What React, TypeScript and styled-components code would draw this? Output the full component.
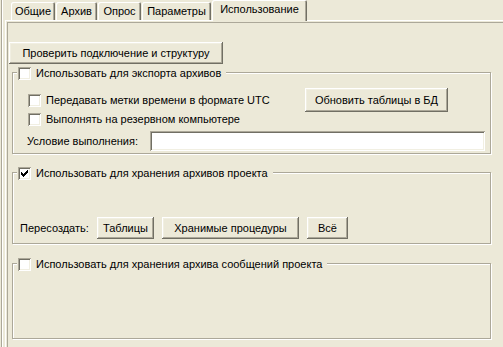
import React from "react";
import styled, { createGlobalStyle } from "styled-components";

const GlobalStyle = createGlobalStyle`
  html, body {
    margin: 0;
    padding: 0;
    background: #ece9d8;
  }
  body {
    font-family: "Liberation Sans", Arial, sans-serif;
    font-size: 11px;
    color: #000;
  }
`;

const Window = styled.div`
  width: 503px;
  height: 347px;
  overflow: hidden;
  background: #ece9d8;
  box-sizing: border-box;
  padding-left: 1px;
  display: flex;
`;

const Frame = styled.div`
  flex: 1;
  display: flex;
  border-left: 1px solid #aca899;
  box-shadow: inset 1px 0 #fff;
  padding-left: 3px;
`;

const TabControl = styled.div`
  flex: 1;
  display: flex;
  flex-direction: column;
`;

const TabRow = styled.div`
  height: 20px;
  display: flex;
  align-items: flex-end;
  gap: 1px;
  padding-left: 6px;
`;

const Tab = styled.div<{ $w: number; $active?: boolean }>`
  position: relative;
  z-index: ${p => (p.$active ? 1 : 0)};
  box-sizing: border-box;
  width: ${p => p.$w}px;
  height: ${p => (p.$active ? 21 : 18)}px;
  margin-bottom: ${p => (p.$active ? -1 : 0)}px;
  padding-bottom: ${p => (p.$active ? 3 : 1)}px;
  display: flex;
  align-items: center;
  justify-content: center;
  background: #ece9d8;
  border-radius: 2px 2px 0 0;
  box-shadow: inset 1px 1px #fff, inset -1px 0 #716f64, inset -2px 0 #aca899;
  white-space: nowrap;
`;

const Page = styled.div`
  flex: 1;
  display: flex;
  border-top: 1px solid #fff;
  border-left: 1px solid #fff;
`;

const Sheet = styled.div`
  flex: 1;
  margin: 1px 0 0 1px;
  border-top: 1px solid #aca899;
  border-left: 1px solid #aca899;
  padding-top: 19px;
  display: flex;
  flex-direction: column;
  align-items: flex-start;
`;

const Button = styled.button<{ $w: number; $h?: number }>`
  box-sizing: border-box;
  width: ${p => p.$w}px;
  height: ${p => p.$h ?? 22}px;
  margin: 0;
  padding: 0 0 1px;
  border: none;
  background: #ece9d8;
  font: inherit;
  color: #000;
  white-space: nowrap;
  box-shadow: inset -1px -1px #716f64, inset 1px 1px #fff,
    inset -2px -2px #aca899, inset 2px 2px #f1efe2;
`;

const CheckButton = styled(Button)`
  margin-left: 1px;
`;

const Group = styled.div<{ $gap: number }>`
  position: relative;
  box-sizing: border-box;
  width: 479px;
  margin: ${p => p.$gap}px 0 0 4px;
  border: 1px solid #aca899;
  box-shadow: inset 1px 1px #fff, 1px 1px #fff;
`;

const Legend = styled.label`
  position: absolute;
  top: -6px;
  left: 4px;
  display: flex;
  align-items: center;
  gap: 5px;
  padding: 0 5px 0 1px;
  background: #ece9d8;
  line-height: 13px;
  white-space: nowrap;
`;

const Box = styled.span`
  flex: none;
  width: 13px;
  height: 13px;
  display: block;
  background: #fff;
  box-shadow: inset 1px 1px #aca899, inset -1px -1px #fff,
    inset 2px 2px #716f64, inset -2px -2px #f1efe2;
`;

const CheckRow = styled.label`
  display: flex;
  align-items: center;
  gap: 5px;
  white-space: nowrap;
`;

const ExportBody = styled.div`
  padding: 15px 0 2px 15px;
  display: grid;
  grid-template-columns: 277px auto;
  grid-template-rows: 24px 14px auto;
  align-items: center;
`;

const ConditionRow = styled.div`
  grid-column: 1 / 3;
  margin: 5px 0 0 -1px;
  display: flex;
  align-items: center;
`;

const Caption = styled.span<{ $w: number }>`
  width: ${p => p.$w}px;
  white-space: nowrap;
`;

const Input = styled.input`
  box-sizing: border-box;
  width: 335px;
  height: 20px;
  margin: 0 0 0 1px;
  padding: 0 3px;
  border: none;
  background: #fff;
  font: inherit;
  box-shadow: inset 1px 1px #aca899, inset -1px -1px #fff,
    inset 2px 2px #716f64, inset -2px -2px #f1efe2;
`;

const StoreBody = styled.div`
  padding: 44px 0 4px 7px;
  display: flex;
  align-items: center;
  gap: 8px;
`;

const EmptyBody = styled.div`
  height: 74px;
`;

const Check = ({ checked }: { checked?: boolean }) => (
  <Box>
    {checked && (
      <svg width="13" height="13" viewBox="0 0 13 13" shapeRendering="crispEdges">
        <path d="M3 5h1v1h1v1h1V6h1V5h1V4h1V3h1v3H9v1H8v1H7v1H6v1H5V9H4V8H3z" fill="#000" />
      </svg>
    )}
  </Box>
);

const tabs = [
  { title: "Общие", w: 44 },
  { title: "Архив", w: 41 },
  { title: "Опрос", w: 43 },
  { title: "Параметры", w: 69 },
  { title: "Использование", w: 95, active: true }
];

const App: React.FC = () => (
  <Window>
    <GlobalStyle />
    <Frame>
      <TabControl>
        <TabRow>
          {tabs.map(t => (
            <Tab key={t.title} $w={t.w} $active={t.active}>
              {t.title}
            </Tab>
          ))}
        </TabRow>
        <Page>
          <Sheet>
            <CheckButton $w={214}>Проверить подключение и структуру</CheckButton>

            <Group $gap={8}>
              <Legend>
                <Check />
                Использовать для экспорта архивов
              </Legend>
              <ExportBody>
                <CheckRow>
                  <Check />
                  Передавать метки времени в формате UTC
                </CheckRow>
                <Button $w={143} $h={24}>Обновить таблицы в БД</Button>
                <CheckRow>
                  <Check />
                  Выполнять на резервном компьютере
                </CheckRow>
                <span />
                <ConditionRow>
                  <Caption $w={122}>Условие выполнения:</Caption>
                  <Input />
                </ConditionRow>
              </ExportBody>
            </Group>

            <Group $gap={18}>
              <Legend>
                <Check checked />
                Использовать для хранения архивов проекта
              </Legend>
              <StoreBody>
                <Caption $w={69}>Пересоздать:</Caption>
                <Button $w={57}>Таблицы</Button>
                <Button $w={137}>Хранимые процедуры</Button>
                <Button $w={41}>Всё</Button>
              </StoreBody>
            </Group>

            <Group $gap={19}>
              <Legend>
                <Check />
                Использовать для хранения архива сообщений проекта
              </Legend>
              <EmptyBody />
            </Group>
          </Sheet>
        </Page>
      </TabControl>
    </Frame>
  </Window>
);

export default App;
